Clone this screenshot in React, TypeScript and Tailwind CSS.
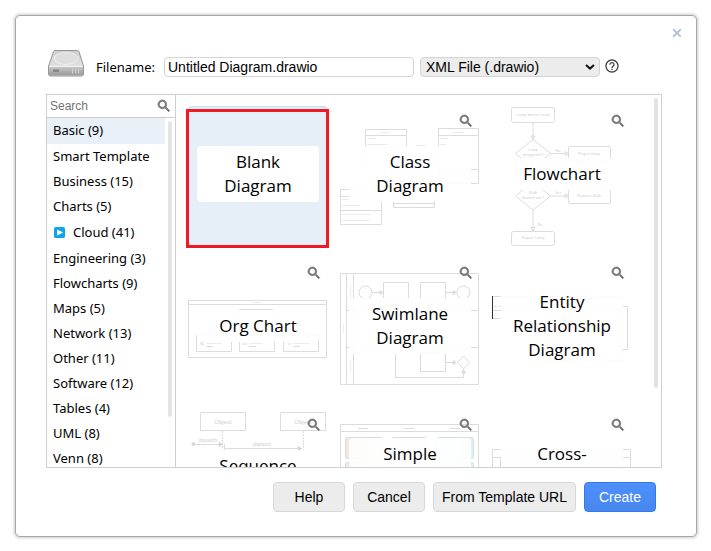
import type { ReactNode } from "react";

const LINE = "#dcdcdc";

function SearchIcon() {
  return (
    <svg viewBox="0 0 24 24" className="size-4 fill-[#777777]" aria-hidden="true">
      <path d="M15.5 14h-.79l-.28-.27C15.41 12.59 16 11.11 16 9.5 16 5.91 13.09 3 9.5 3S3 5.91 3 9.5 5.91 16 9.5 16c1.61 0 3.09-.59 4.23-1.57l.27.28v.79l5 4.99L20.49 19l-4.99-5zm-6 0C7.01 14 5 11.99 5 9.5S7.01 5 9.5 5 14 7.01 14 9.5 11.99 14 9.5 14z" stroke="#777777" strokeWidth="1.3" />
    </svg>
  );
}

function DriveIcon() {
  return (
    <svg viewBox="0 0 38 29" className="ml-px h-[29px] w-[38px]" aria-hidden="true">
      <defs>
        <linearGradient id="driveTop" x1="0" y1="0" x2="0" y2="1">
          <stop offset="0" stopColor="#cfcfcf" />
          <stop offset="1" stopColor="#ececec" />
        </linearGradient>
        <linearGradient id="driveFront" x1="0" y1="0" x2="0" y2="1">
          <stop offset="0" stopColor="#c8c8c8" />
          <stop offset="1" stopColor="#9a9a9a" />
        </linearGradient>
      </defs>
      <path d="M8 2.500h22.500q1 0 1.400 1L36.500 18v8q0 2-2 2h-31q-2 0-2-2v-8L6.600 3.500Q7 2.500 8 2.500z" fill="url(#driveTop)" stroke="#979797" />
      <ellipse cx="19" cy="10.500" rx="12" ry="6" fill="#dedede" stroke="#efefef" />
      <path d="M2 19.500q0-1 1-1h32q1 0 1 1V26q0 1.500-1.500 1.500h-31Q2 27.500 2 26z" fill="url(#driveFront)" />
      <path d="M2.500 18.500h33" stroke="#f4f4f4" />
      <path d="M6 21.500h6v2.500H6z" fill="#868686" />
      <path d="M25.500 20.500v5M28.500 20.500v5M31.500 20.500v5" stroke="#d0d0d0" />
    </svg>
  );
}

function Thumb({ children }: { children?: ReactNode }) {
  return (
    <svg viewBox="0 0 140 140" className="size-full" fill="none" stroke={LINE} aria-hidden="true">
      {children}
    </svg>
  );
}

function Tiny({ x, y, size = 4, children }: { x: number; y: number; size?: number; children: string }) {
  return (
    <text x={x} y={y} fontSize={size} textAnchor="middle" fill="#cfcfcf" stroke="none" fontFamily="Liberation Sans, sans-serif">
      {children}
    </text>
  );
}

const classThumb = (
  <Thumb>
    <path d="M25.500 60V23.500h41V60M25.500 29.500h41M98.500 77.500v-55h40v55zM98.500 29.500h40M98.500 63.500h40" />
    <path d="M.5 83.500h41v35H.5zM.5 90.500h41M.5 104.500h41M53.500 75.500h41v26h-41zM53.500 97.500h41" />
    <path d="M40 26.500h10M27 32.500h8M27 38.500h20M112 26.500h12M100 32.500h8M100 38.500h6M76 39.500h10M2 93.500h8M2 99.500h18M2 108.500h28M2 114.500h28" stroke="#ebebeb" />
  </Thumb>
);

const flowThumb = (
  <Thumb>
    <path d="M41 16v17M58.500 47.500H76M58.500 90H76M41 104v21" />
    <path d="M39 30h4l-2 3.500zM73 45.500v4l3.500-2zM73 88v4l3.500-2zM39 121.500h4l-2 3.500z" fill="#f4f4f4" />
    <rect x="19.5" y="1.500" width="43" height="15" rx="2" />
    <path d="M41 33.500l17.500 14-17.500 14-17.500-14zM41 76l17.500 14L41 104 23.500 90z" />
    <rect x="76.5" y="40.500" width="42" height="14.500" rx="1.500" />
    <rect x="76.5" y="83" width="42" height="14.500" rx="1.500" />
    <rect x="19.5" y="125.500" width="43" height="14" rx="2" />
    <Tiny x={41} y={10}>Lamp doesn't work</Tiny>
    <Tiny x={41} y={45}>Lamp</Tiny>
    <Tiny x={41} y={50}>plugged in?</Tiny>
    <Tiny x={66} y={46}>No</Tiny>
    <Tiny x={97} y={49}>Plug in lamp</Tiny>
    <Tiny x={41} y={88}>Bulb</Tiny>
    <Tiny x={41} y={93}>burned out?</Tiny>
    <Tiny x={66} y={88}>Yes</Tiny>
    <Tiny x={97} y={91}>Replace Bulb</Tiny>
    <Tiny x={48} y={120}>No</Tiny>
    <Tiny x={41} y={133}>Repair Lamp</Tiny>
  </Thumb>
);

const orgThumb = (
  <Thumb>
    <path d="M.5 42.500h138v57H.5zM.5 46.500h138M51.500 51.500h33v16h-33z" />
    <path d="M8.500 77.500h35v16h-35zM51.500 77.500h35v16h-35zM95.500 77.500h35v16h-35z" />
    <path d="M64 44.500h10M18 85.500h16M61 85.500h14M105 85.500h16" stroke="#ececec" />
    <path d="M18 88.500h7M61 88.500h7M105 88.500h7" stroke="#d6dbe6" />
    <path d="M13 84h2v3h-2zM54 86h5M100 86h3" stroke="#dddddd" />
  </Thumb>
);

const swimThumb = (
  <Thumb>
    <path d="M.5 15.500h138v111H.5zM6.500 15.500v111M13.500 15.500v111M6.500 52.500h132M6.500 89.500h132" />
    <circle cx="25.500" cy="34.500" r="6.500" />
    <circle cx="123.500" cy="34.500" r="6.500" />
    <path d="M32 34.500h11M43.500 24.500h25v20h-25zM80.500 24.500h25v20h-25zM105.500 34.500h11" />
    <path d="M80.500 94.500h25v19h-25zM105.500 104.500h11M123.500 98l6 6.500-6 6.500-6-6.500zM55.500 90v29.500h68V112" />
    <path d="M40 32.500v4l3-2zM113 32.500v4l3-2zM113 102.500v4l3-2zM121.500 115h4l-2-3.500z" fill={LINE} />
    <path d="M10.500 28v12M10.500 102v12M3.500 66v9" stroke="#eeeeee" />
  </Thumb>
);

const entityThumb = (
  <Thumb>
    <path d="M.5 38v23" stroke="#333333" />
    <path d="M1 38.500h9M1 52.500h9M1 60.500h9M3 48.500h2M7 48.500h3M130 48.500h5.500v43H131" />
    <path d="M9 38.500h121v64M9 52.500h121M77.500 52v50M40 102.500h90" />
  </Thumb>
);

const sequenceThumb = (
  <Thumb>
    <path d="M12.500 2.500h45v18h-45zM92.500 2.500h45v18h-45z" />
    <path d="M34.500 21v20M115.500 21v20" strokeDasharray="2 1" />
    <circle cx="5.500" cy="34" r="1.500" fill="#cccccc" />
    <path d="M7 34.500h27M36.500 34v10M36.500 38.500h77" />
    <path d="M31 32.500v4l3.500-2zM110 36.500v4l3.500-2z" fill="#cccccc" />
    <Tiny x={35} y={14} size={6}>Object</Tiny>
    <Tiny x={115} y={14} size={6}>Object</Tiny>
    <Tiny x={20} y={32} size={5}>dispatch</Tiny>
    <Tiny x={74} y={36} size={5}>dispatch</Tiny>
  </Thumb>
);

const simpleThumb = (
  <Thumb>
    <defs>
      <linearGradient id="warm" x1="0" x2="1">
        <stop offset="0" stopColor="#f7e4de" />
        <stop offset="1" stopColor="#fdfaf6" />
      </linearGradient>
      <linearGradient id="cool" x1="0" x2="1">
        <stop offset="0" stopColor="#f3fafa" />
        <stop offset="1" stopColor="#dff0f9" />
      </linearGradient>
    </defs>
    <path d="M.5 14.500h138v120H.5zM.5 21.500h138" />
    <g stroke="#d5dbe2">
      <rect x="5.500" y="27.500" width="37" height="21" rx="2" fill="url(#warm)" />
      <rect x="51.500" y="27.500" width="35" height="21" rx="2" fill="#f3f8f2" />
      <rect x="97" y="27.500" width="36.500" height="21" rx="2" fill="url(#cool)" />
      <rect x="5.500" y="52.500" width="37" height="21" rx="2" fill="url(#warm)" />
      <rect x="97" y="52.500" width="36.500" height="21" rx="2" fill="url(#cool)" />
    </g>
    <path d="M18 18.500h10M64 18.500h10M110 18.500h10" />
  </Thumb>
);

const crossThumb = (
  <Thumb>
    <path d="M.5 39.500h138v80H.5zM.5 47.500h138M8.500 47.500v70M130 47.500v70" />
  </Thumb>
);

const oneLine = "h-8";
const twoLines = "h-14";
const threeLines = "h-20";

const templates: { name: string; height: string; thumb?: ReactNode }[] = [
  { name: "Blank Diagram", height: twoLines },
  { name: "Class Diagram", height: twoLines, thumb: classThumb },
  { name: "Flowchart", height: oneLine, thumb: flowThumb },
  { name: "Org Chart", height: oneLine, thumb: orgThumb },
  { name: "Swimlane Diagram", height: twoLines, thumb: swimThumb },
  { name: "Entity Relationship Diagram", height: threeLines, thumb: entityThumb },
  { name: "Sequence", height: twoLines, thumb: sequenceThumb },
  { name: "Simple", height: threeLines, thumb: simpleThumb },
  { name: "Cross-", height: threeLines, thumb: crossThumb },
];

const categories = [
  "Basic (9)",
  "Smart Template",
  "Business (15)",
  "Charts (5)",
  "Cloud (41)",
  "Engineering (3)",
  "Flowcharts (9)",
  "Maps (5)",
  "Network (13)",
  "Other (11)",
  "Software (12)",
  "Tables (4)",
  "UML (8)",
  "Venn (8)",
];

function Category({ name }: { name: string }) {
  if (name === "Cloud (41)") {
    return (
      <button className="flex h-[27px] items-center gap-2 px-1.5 text-left">
        <svg viewBox="0 0 12 12" className="ml-px size-[11px]" aria-hidden="true">
          <rect width="12" height="12" rx="2" fill="#0ea5e9" />
          <path d="M3.500 2.800L10 6l-6.500 3.200z" fill="#ffffff" />
        </svg>
        {name}
      </button>
    );
  }
  return (
    <button
      className={
        name === "Basic (9)"
          ? "mr-[10px] h-[26px] bg-[#e9f0f8] px-1.5 text-left"
          : "h-[25px] px-1.5 text-left"
      }
    >
      {name}
    </button>
  );
}

function Template({ name, height, thumb }: { name: string; height: string; thumb?: ReactNode }) {
  return (
    <div className="relative size-[140px] shrink-0">
      {thumb ?? <div className="size-full rounded-sm border border-[#c6dcf1] bg-[#e6eef8]" />}
      <button className="absolute inset-0 flex items-center justify-center pb-1">
        <span
          className={
            height +
            " w-[122px] rounded-sm px-3 py-1 font-['Open_Sans','Segoe_UI',sans-serif] text-[17px] leading-6 " +
            (thumb ? "bg-white/90" : "bg-white")
          }
        >
          {name}
        </span>
      </button>
      {thumb ? (
        <button aria-label={"Preview " + name} className="absolute top-[7px] right-1.5">
          <SearchIcon />
        </button>
      ) : (
        <div className="pointer-events-none absolute top-[3px] -right-px -bottom-0.5 -left-0.5 border-[3px] border-[#ed1c24]" />
      )}
    </div>
  );
}

const plainButton =
  "h-[30px] min-w-[72px] rounded-[4px] border border-[#d8d8d8] bg-[#ececec] px-2 text-[14px] leading-4";

export default function App() {
  return (
    <main className="flex h-screen min-h-[400px] flex-col bg-white pt-[15px] pr-[14px] pb-[14px] pl-[15px] font-['Noto_Sans','Segoe_UI',sans-serif] text-[13px] text-black">
      <section
        role="dialog"
        aria-label="New diagram"
        className="relative flex min-h-0 flex-1 flex-col rounded-[5px] border border-[#a6a6a6] bg-white pt-8 pr-[34px] pb-6 pl-[30px] shadow-[0_0_3px_1px_#cccccc]"
      >
        <button aria-label="Close" className="absolute top-3 right-3.5">
          <svg viewBox="0 0 10 10" className="size-[10px]" aria-hidden="true">
            <path d="M1.200 1.200l7.600 7.600M8.800 1.200L1.200 8.800" stroke="#b5c4da" strokeWidth="2" />
          </svg>
        </button>

        <header className="mb-[17px] flex items-end">
          <DriveIcon />
          <label htmlFor="filename" className="mr-2 ml-[11px] w-[60px] leading-5 whitespace-nowrap">
            Filename:
          </label>
          <input
            id="filename"
            defaultValue="Untitled Diagram.drawio"
            className="h-5 w-[250px] min-w-0 rounded-[4px] border border-[#d4d4d4] px-[3px] font-['Liberation_Sans',Arial,sans-serif] text-[14px]"
          />
          <div className="relative ml-1.5 h-5 w-[180px]">
            <select
              aria-label="File type"
              className="h-5 w-full appearance-none rounded-[4px] border border-[#d4d4d4] bg-[#ececec] px-[5px] font-['Liberation_Sans',Arial,sans-serif] text-[14px] leading-4"
            >
              <option>XML File (.drawio)</option>
            </select>
            <svg viewBox="0 0 10 6" className="pointer-events-none absolute top-[7px] right-[5px] h-1.5 w-[10px]" aria-hidden="true">
              <path d="M1 1l4 3.600L9 1" fill="none" stroke="#111111" strokeWidth="2" />
            </svg>
          </div>
          <a href="#help" aria-label="Help on file types" className="mb-[3px] ml-1">
            <svg viewBox="0 0 24 24" className="size-4 fill-[#444444]" aria-hidden="true">
              <path d="M11 18h2v-2h-2v2zm1-16C6.480 2 2 6.480 2 12s4.480 10 10 10 10-4.480 10-10S17.520 2 12 2zm0 18c-4.410 0-8-3.590-8-8s3.590-8 8-8 8 3.590 8 8-3.590 8-8 8zm0-14c-2.210 0-4 1.790-4 4h2c0-1.100.9-2 2-2s2 .9 2 2c0 2-3 1.750-3 5h2c0-2.250 3-2.500 3-5 0-2.210-1.790-4-4-4z" />
            </svg>
          </a>
        </header>

        <div className="flex min-h-0 flex-1 border border-[#cfcfcf]">
          <nav className="relative flex w-[129px] shrink-0 flex-col border-r border-[#cfcfcf]">
            <div className="flex h-[23px] shrink-0 items-center border-b border-[#cfcfcf] pr-[3px]">
              <input
                type="search"
                aria-label="Search templates"
                placeholder="Search"
                className="h-5 min-w-0 flex-1 px-[3px] font-['Liberation_Sans',Arial,sans-serif] text-[12px] placeholder:text-[#757575]"
              />
              <SearchIcon />
            </div>
            <div className="flex min-h-0 flex-1 flex-col overflow-hidden *:shrink-0">
              {categories.map((name) => (
                <Category key={name} name={name} />
              ))}
            </div>
            <div className="absolute top-[26px] right-[3px] bottom-[50px] w-1 rounded-sm bg-[#e4e4e4]" />
          </nav>

          <div className="relative min-w-0 flex-1 overflow-hidden">
            <div className="flex flex-wrap gap-3 pt-[11px] pl-3">
              {templates.map((t) => (
                <Template key={t.name} name={t.name} height={t.height} thumb={t.thumb} />
              ))}
            </div>
            <div className="absolute top-[3px] right-[3px] bottom-[79px] w-1 rounded-sm bg-[#e2e2e2]" />
          </div>
        </div>

        <footer className="mt-3.5 mr-1.5 flex justify-end gap-2 font-['Liberation_Sans',Arial,sans-serif]">
          <button className={plainButton}>Help</button>
          <button className={plainButton}>Cancel</button>
          <button className={plainButton}>From Template URL</button>
          <button className="h-[30px] min-w-[72px] rounded-[4px] border border-[#3079ed] bg-linear-to-b from-[#4d90fe] to-[#4787ed] px-2 text-[14px] leading-4 text-white">
            Create
          </button>
        </footer>
      </section>
    </main>
  );
}
